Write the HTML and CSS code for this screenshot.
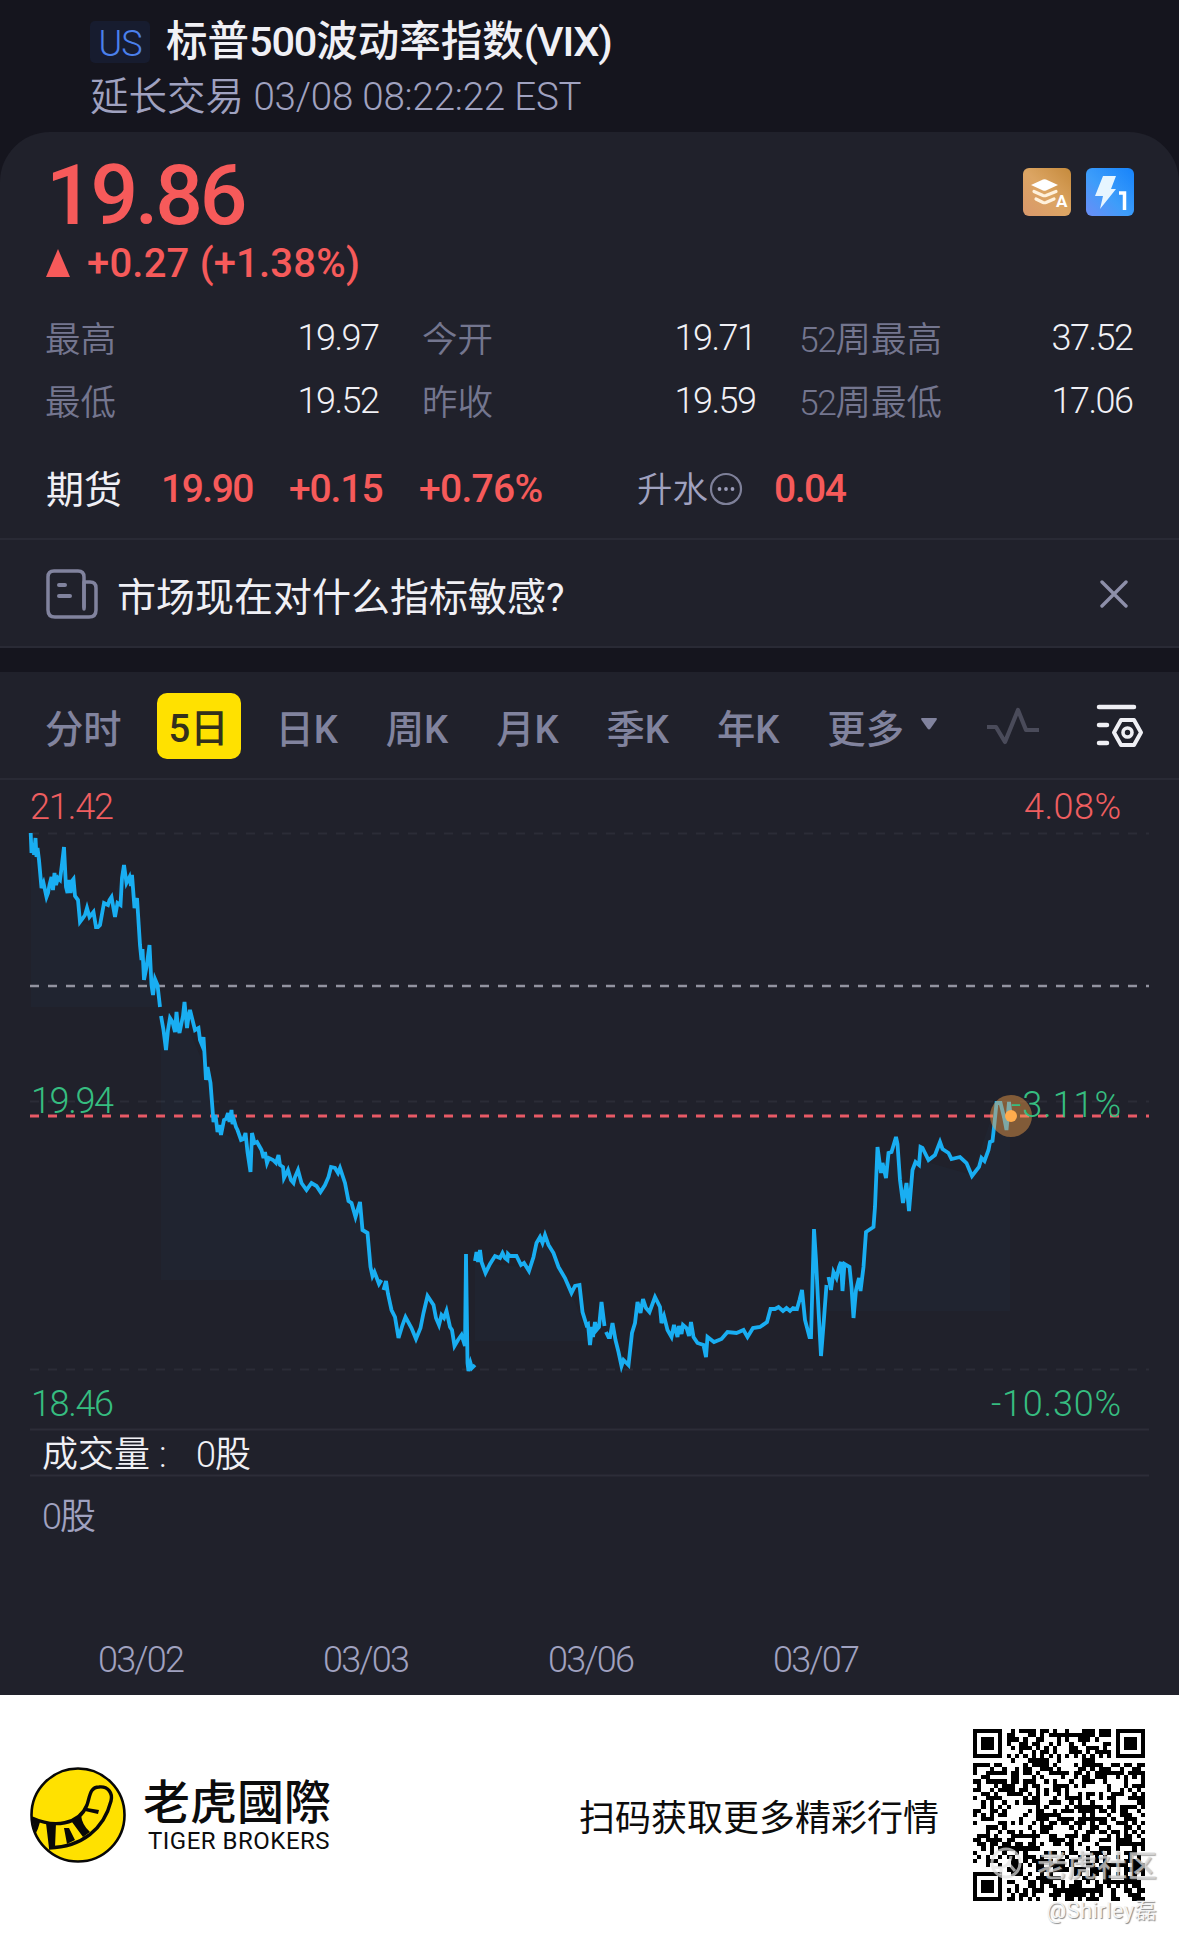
FILE: index.html
```html
<!DOCTYPE html>
<html lang="zh-CN">

<head>
    <meta charset="UTF-8">
    <meta name="viewport" content="width=device-width, initial-scale=1.0">
    <title>标普500波动率指数(VIX)</title>
    <link rel="stylesheet" href="styles.css">
</head>

<body>
    <header class="header">
        <div class="title-row">
            <span class="market">US</span>
            <h1>标普<span class="latin">500</span>波动率指数<span class="latin">(VIX)</span></h1>
        </div>
        <div class="session">延长交易 <span>03/08 08:22:22 EST</span></div>
    </header>

    <!-- Quote -->
    <section class="quote">
        <div class="quote-top">
            <div class="price">19.86</div>
            <div class="badges">
                <svg width="48" height="48" viewBox="0 0 48 48">
                    <defs>
                        <linearGradient id="gold" x1="0" y1="1" x2="1" y2="0">
                            <stop offset="0" stop-color="#d9986c" />
                            <stop offset=".5" stop-color="#dca563" />
                            <stop offset="1" stop-color="#c58a3c" />
                        </linearGradient>
                    </defs>
                    <rect width="48" height="48" rx="6" fill="url(#gold)" />
                    <path d="M8 17 20 11.5Q21.500 11 23 11.500L35 17 23 22.500Q21.500 23 20 22.500Z" fill="#fff" />
                    <path d="M11 23.500 20 27.500Q21.500 28 23 27.500L33 23.500M13 31 20 34.500Q21.500 35 23 34.500L31 31" fill="none" stroke="#fff1dc" stroke-width="3.200" stroke-linecap="round" />
                    <text x="33" y="39" class="badge-text" font-size="17">A</text>
                </svg>
                <svg width="48" height="48" viewBox="0 0 48 48">
                    <defs>
                        <linearGradient id="blue" x1="0" y1="1" x2="1" y2="0">
                            <stop offset="0" stop-color="#6b8df5" />
                            <stop offset=".45" stop-color="#3d9dfa" />
                            <stop offset="1" stop-color="#1683fb" />
                        </linearGradient>
                    </defs>
                    <rect width="48" height="48" rx="6" fill="url(#blue)" />
                    <path d="M17 8h13l-5 13h5L14 41l3-13H9Z" fill="#e6f5ff" />
                    <path d="M33 25h5.500v17" fill="none" stroke="#fff" stroke-width="3.500" />
                </svg>
            </div>
        </div>
        <div class="change">
            <svg width="24" height="28" viewBox="0 0 24 28">
                <path d="M12 0 24 28H0Z" fill="#f65a5a" />
            </svg>
            <span>+0.27 (+1.38%)</span>
        </div>

        <div class="stats">
            <div class="stat"><label>最高</label><span>19.97</span></div>
            <div class="stat"><label>今开</label><span>19.71</span></div>
            <div class="stat"><label><i>52</i>周最高</label><span>37.52</span></div>
            <div class="stat"><label>最低</label><span>19.52</span></div>
            <div class="stat"><label>昨收</label><span>19.59</span></div>
            <div class="stat"><label><i>52</i>周最低</label><span>17.06</span></div>
        </div>

        <div class="futures">
            <span class="futures-name">期货</span>
            <span class="up last">19.90</span>
            <span class="up diff">+0.15</span>
            <span class="up pct">+0.76%</span>
            <span class="premium">升水</span>
            <svg width="34" height="34" viewBox="0 0 34 34">
                <circle cx="17" cy="17" r="15" fill="none" stroke="#7e8099" stroke-width="2.200" />
                <g fill="#9a9cb8">
                    <circle cx="10.500" cy="17" r="1.900" />
                    <circle cx="17" cy="17" r="1.900" />
                    <circle cx="23.500" cy="17" r="1.900" />
                </g>
            </svg>
            <span class="up spread">0.04</span>
        </div>
    </section>

    <div class="news">
        <svg width="52" height="50" viewBox="0 0 52 50" fill="none" stroke="#81839e" stroke-width="3.500" stroke-linecap="round">
            <path d="M38 38V8Q38 2 32 2H8Q2 2 2 8V41Q2 48 9 48H43Q50 48 50 41V19Q50 13 44 13H39" />
            <path d="M38 13V40" />
            <path d="M13 16H19M13 27H24" stroke-width="4" />
        </svg>
        <span class="news-text">市场现在对什么指标敏感?</span>
        <svg width="28" height="28" viewBox="0 0 28 28" stroke="#8d8fa9" stroke-width="3.400" stroke-linecap="round">
            <path d="M2 2 26 26M26 2 2 26" />
        </svg>
    </div>

    <!-- Chart -->
    <nav class="tabs">
        <span>分时</span>
        <span class="active">5日</span>
        <span>日K</span>
        <span>周K</span>
        <span>月K</span>
        <span>季K</span>
        <span>年K</span>
        <span>更多</span>
        <svg class="caret" width="16" height="12" viewBox="0 0 16 12">
            <path d="M1 0H15Q16.500 0 15.500 2L9.500 10.500Q8 12.500 6.500 10.500L.5 2Q-.5 0 1 0Z" fill="#81839e" />
        </svg>
        <svg class="wave" width="54" height="38" viewBox="0 0 54 38" fill="none" stroke="#4a4b5a" stroke-width="4.200" stroke-linejoin="round">
            <path d="M1 20H10L19 35L32 3L40 23H53" />
        </svg>
        <svg class="settings" width="48" height="44" viewBox="0 0 48 44" fill="none" stroke="#efeff4" stroke-width="4.500" stroke-linecap="round" stroke-linejoin="round">
            <path d="M3 3H38M3 21H11M3 39H11" />
            <path d="M25 16H38L45 28.500 38 41H25L18 28.500Z" stroke-width="4" />
            <circle cx="31.500" cy="28.500" r="4.500" stroke-width="3.600" />
        </svg>
    </nav>

    <svg class="chart" width="1179" height="915" viewBox="0 780 1179 915">
        <!-- grid -->
        <g stroke="#2b2c37" stroke-width="2" stroke-dasharray="9 9">
            <path d="M30 833.500H1149M30 1101.500H1149M30 1369.500H1149" />
        </g>
        <path d="M30 1429.500H1149M30 1475.500H1149" stroke="#2c2d38" stroke-width="2" />

        <!-- area -->
        <g class="area">
            <path d="M31 850 42 885 64 870 80 922 97 928 124 875 134 900 144 975 160 1007H31Z" />
            <path d="M161 1016 184 1018 206 1070 218 1130 250 1148 316 1186 340 1170 365 1233 382 1280H161Z" />
            <path d="M475 1262 530 1268 543 1240 570 1290 590 1341H475Z" />
            <path d="M828 1285 862 1280 880 1165 896 1140 909 1210 920 1160 972 1175 996 1105 1010 1116V1311H828Z" />
        </g>

        <path d="M30 986H1149" stroke="#9293a0" stroke-width="2.600" stroke-dasharray="9 9" />
        <path d="M30 1116H1149" stroke="#e85a66" stroke-width="3" stroke-dasharray="9 9" />

        <!-- price -->
        <g class="line">
            <polyline points="30.7,833 31.5,853 33.5,843 34,855 35.5,838 36.5,857 37.500,848 39,860 41.5,888 43.5,883 46.5,897 48,893 49.5,885 51.5,877 53,890 54.5,873 56,885 58,878 60,880 62,864 64,847 66,887 67.500,893 69,880 70.5,893 72,881 73.5,879 75,896 78,900 80,922 83,918 85,915 87,908 89.5,917 93.5,912 96,927 98,927 100,925 102,914 104,903 108,905 109.500,900 111.5,897 115,917 117.5,903 120.5,905 122,878 124,865 126.5,883 129.5,877 131,886 132,875 134.5,908 137,898 140,945 141.500,960 142.5,949 144,980 146.5,967 149.5,945 151.5,985 153,995 155,979 157.5,985 160,1007" />
            <polyline points="161,1016 163.5,1030 166,1050 168,1030 170,1018 172.5,1022 175,1032 176.5,1012 178,1028 179.5,1033 181.5,1023 183,1016 184.5,1002 187,1028 188.500,1017 190,1010 192.5,1020 195,1030 198.5,1028 200,1040 202,1045 203.5,1037 206,1080 207.5,1067 210.5,1083 213.5,1122 215.5,1115 217.5,1132 219,1125 221,1135 224,1120 226,1119 228,1113 229.5,1122 231.5,1110 232.500,1124 234,1120 236,1127 237.5,1130 241,1140 243.500,1139 245.5,1133 247.500,1152 250.5,1172 252,1133 254.500,1143 257,1142 261.5,1150 263.5,1158 265,1152 267,1163 269,1158 273,1160 276,1163 278.5,1155 280,1165 283,1167 284,1178 288,1170 291,1180 293.5,1183 295,1177 298,1170 301.5,1183 306.5,1190 311.5,1183 316.5,1186 320.5,1192 325,1185 328.5,1177 331,1167 335,1168 338,1173 340,1168 345,1183 348.5,1201 351.5,1203 355.5,1217 360,1202 362.5,1230 367.5,1233 370.5,1267 372.5,1276 374.5,1272 379,1284 381.5,1280" />
            <polyline points="383.5,1290 386,1281 388,1294 391.5,1310 395,1317 398.5,1338 402.5,1325 405.5,1317 411.5,1328 416,1339 420.5,1328 423.5,1313 427.5,1296 433.5,1305 436,1318 439,1325 441.5,1315 444,1318 446.5,1311 450,1327 452,1330 454.5,1346 458,1340 461.5,1335 465,1346 466,1254 467.5,1363 468.5,1371 470.5,1363 472,1368 475,1365" />
            <polyline points="475,1261 476.5,1252 478,1262 480,1250 481.5,1262 485.5,1273 490,1264 495,1256 500,1258 502.5,1253 505,1258 507.5,1260 508,1254 510,1256 516.5,1256 521,1265 524,1263 529,1271 533.5,1257 536.5,1243 540,1237 542.5,1243 545,1235 548.5,1245 553.5,1253 558.5,1267 565,1278 571.5,1293 575,1286 579.5,1285 582.5,1312 586.5,1325 588,1324 590,1345 592,1327 593,1337 595,1322 596.5,1330 599,1327 601.5,1302 604.5,1326" />
            <polyline points="606,1332 608.5,1337 610,1337 612.5,1323 615.5,1340 618.5,1352 621.5,1366 623.5,1360 628.5,1365 632,1333 635,1323 637.5,1302 640.5,1313 643,1299 646,1308 649.5,1312 655,1297 660,1307 661.5,1323 664,1316 667.5,1330 671.5,1337 674,1325 677.5,1337 679,1326 681.5,1334 683,1325 686.5,1328 689,1336 691,1322 693.5,1337 697.5,1343 703.5,1345 706,1357 707.5,1337 714,1342 721.5,1339 727.5,1332 736.5,1333 743.5,1330 747.5,1337 753,1328 760,1327 767,1322 770.5,1309 775,1309 778.5,1307 783,1311 786.5,1308 790,1311 793,1308 797,1309 799.5,1300 802,1290 805,1320 809.5,1337 811,1337 814,1229 816,1260 818.5,1310 821,1356 823.5,1325 826.5,1285" />
            <polyline points="828.5,1277 831,1290 833.5,1272 836.5,1278 839,1267 841,1262 842.5,1291 844.5,1264 849.5,1267 851.5,1287 853.5,1318 856,1290 859,1278 860.5,1291 863.5,1267 866,1232 873.5,1227 875,1207 877.5,1147 881,1173 882.5,1163 886,1178 888.5,1153 891.5,1152 896,1137 897.500,1144 900,1180 903,1203 906.5,1183 909,1211 912.5,1170 915.5,1162 919,1165 920.5,1147 922.5,1148 924,1151 928.5,1160 935,1155 940,1142 942.5,1149 948.5,1153 951.5,1159 960,1157 966.5,1163 972,1176 979,1167 981.5,1158 984.5,1161 988.5,1150 990,1142 992.5,1141 994.5,1123 996.5,1103 1000.5,1103 1004,1117 1006.5,1130 1009,1102 1010.7,1116" />
        </g>

        <circle cx="1011" cy="1116" r="21" fill="#f9a24a" fill-opacity=".45" />
        <circle cx="1011" cy="1116" r="6" fill="#ffac4d" />

        <!-- axis labels -->
        <g class="axis red">
            <text x="30" y="819" textLength="84">21.42</text>
            <text x="1024" y="819" textLength="97">4.08%</text>
        </g>
        <g class="axis green">
            <text x="31" y="1113" textLength="83">19.94</text>
            <text x="1011" y="1117" textLength="110">-3.11%</text>
            <text x="31" y="1416" textLength="83">18.46</text>
            <text x="991" y="1416" textLength="130">-10.30%</text>
        </g>
        <g class="axis volume">
            <text x="42" y="1467">成交量</text>
            <text x="159" y="1467">:</text>
            <text x="196" y="1467" textLength="55">0股</text>
        </g>
        <g class="axis">
            <text x="42" y="1529" textLength="54">0股</text>
            <text x="98" y="1672" textLength="87">03/02</text>
            <text x="323" y="1672" textLength="87">03/03</text>
            <text x="548" y="1672" textLength="87">03/06</text>
            <text x="773" y="1672" textLength="87">03/07</text>
        </g>
    </svg>

    <footer class="footer">
        <svg class="logo" width="96" height="96" viewBox="0 0 96 96">
            <circle cx="48" cy="48" r="46.500" fill="#ffe100" stroke="#080808" stroke-width="2.600" />
            <path d="M2 51C24 61 49 58 57 38C60 29 60 20 69 20C78 19 83 26 81 34C74 62 52 80 19 81" fill="none" stroke="#080808" stroke-width="3.400" />
            <path d="M2 50 10 55Q8 63 5 68ZM16 56 26 56 25 80 19 81ZM34 61H39L45 73 37 77ZM42 55 51 48Q52 58 60 65L53 70ZM57 41 69 43 68 47 55 44Z" fill="#080808" />
        </svg>
        <div class="brand">
            <strong>老虎國際</strong>
            <span>TIGER BROKERS</span>
        </div>
        <p>扫码获取更多精彩行情</p>
        <div class="qr">
            <svg id="qr" width="172" height="172" viewBox="0 0 41 41" shape-rendering="crispEdges"></svg>
            <div class="watermark community">
                <svg width="34" height="34" viewBox="0 0 34 34" fill="none" stroke="currentColor" stroke-width="3">
                    <circle cx="17" cy="17" r="14" />
                    <path d="M5 21Q20 24 22 10M12 21V29M20 18 26 25" />
                </svg>
                <span>老虎社区</span>
            </div>
            <div class="watermark author">@Shirley磊</div>
        </div>
    </footer>

    <script src="script.js"></script>
</body>

</html>
```

FILE: styles.css
```css
* {
    box-sizing: border-box;
}

body {
    margin: 0;
    width: 1179px;
    background-color: #15151e;
    color: #f0f0f5;
    font-family: Roboto, "Noto Sans CJK SC", sans-serif;
}

svg {
    display: block;
    flex-shrink: 0;
}

/* Header */
.header {
    height: 132px;
    padding: 16px 90px 0;
}

.title-row {
    display: flex;
    align-items: center;
    height: 52px;
}

.market {
    width: 60px;
    height: 42px;
    border-radius: 5px;
    background-color: #171c2f;
    color: #4b80ec;
    font-size: 36px;
    font-weight: 350;
    line-height: 46px;
    text-align: center;
    letter-spacing: -1px;
}

h1 {
    margin: 0 0 0 16px;
    font-size: 41.5px;
    font-weight: 500;
    line-height: 52px;
    white-space: nowrap;
}

.latin {
    letter-spacing: -1.2px;
}

.session {
    height: 56px;
    color: #a0a2c0;
    font-size: 38.5px;
    font-weight: 350;
    line-height: 58px;
    white-space: pre;
}

.session span {
    letter-spacing: -0.2px;
}

/* Quote */
.quote {
    height: 408px;
    padding: 22px 46px 0;
    border-radius: 50px 50px 0 0;
    border-bottom: 2px solid #292a35;
    background-color: #20212b;
}

.quote-top {
    display: flex;
    justify-content: space-between;
    height: 84px;
}

.price {
    color: #f65a5a;
    font-size: 84px;
    font-weight: 500;
    line-height: 84px;
    letter-spacing: -3.2px;
}

.badges {
    display: flex;
    gap: 15px;
    padding-top: 14px;
    margin-right: -1px;
}

.badge-text {
    fill: #fff;
    font-weight: 700;
}

.change {
    display: flex;
    align-items: center;
    gap: 17px;
    height: 50px;
    color: #f65a5a;
    font-size: 40px;
    font-weight: 500;
    letter-spacing: 0.2px;
}

.stats {
    display: grid;
    grid-template-columns: repeat(3, 333px);
    grid-auto-rows: 63px;
    column-gap: 44px;
    margin-top: 18px;
}

.stat {
    display: flex;
    align-items: center;
    justify-content: space-between;
    font-size: 36px;
    font-weight: 350;
    letter-spacing: -1.5px;
}

.stat label {
    margin: -2px 0 0 -1px;
    color: #74768f;
    font-size: 35.5px;
    letter-spacing: 0;
}

.stat i {
    font-style: normal;
    letter-spacing: -1.5px;
}

.stat span {
    margin-right: 0.5px;
}

.futures {
    display: flex;
    align-items: center;
    height: 52px;
    margin-top: 31px;
    font-size: 38px;
    white-space: nowrap;
}

.futures .up {
    color: #f65a5a;
    font-size: 39px;
    font-weight: 500;
    letter-spacing: -1.5px;
}

.futures .futures-name {
    width: 115px;
    margin-top: -5px;
}

.futures .last {
    width: 128px;
}

.futures .diff {
    width: 130px;
    letter-spacing: -1.1px;
}

.futures .pct {
    width: 218px;
    letter-spacing: -0.7px;
}

.premium {
    width: 72px;
    margin-top: -5px;
    color: #a0a2c0;
    font-size: 35.5px;
    font-weight: 350;
}

.spread {
    margin-left: 31px;
}

/* News */
.news {
    display: flex;
    align-items: center;
    height: 108px;
    padding: 2px 51px 0 46px;
    border-bottom: 2px solid #292a35;
    background-color: #20212b;
}

.news-text {
    flex: 1;
    margin-left: 19px;
    font-size: 39px;
}

/* Tabs */
.tabs {
    display: flex;
    align-items: center;
    gap: 47.9px;
    height: 108px;
    margin-top: 24px;
    padding: 2px 0 0 45px;
    border-bottom: 2px solid #292a35;
    background-color: #20212b;
    color: #81839e;
    font-size: 38.3px;
    font-weight: 500;
    white-space: nowrap;
}

.tabs .active {
    width: 84px;
    height: 66px;
    margin: 0 -13px;
    border-radius: 10px;
    background-color: #ffe100;
    color: #33301c;
    line-height: 71px;
    text-align: center;
}

.tabs .caret {
    margin: 0 0 4px -31px;
}

.tabs .wave {
    margin-left: 1px;
}

.tabs .settings {
    margin-left: 8px;
}

/* Chart */
.chart {
    background-color: #20212b;
}

.area {
    fill: #1fa9e8;
    fill-opacity: 0.03;
}

.line {
    fill: none;
    stroke: #19aef2;
    stroke-width: 3.8;
    stroke-linejoin: miter;
}

.axis {
    fill: #a0a2c0;
    font-size: 36px;
    font-weight: 350;
}

.axis.red {
    fill: #ef5e60;
}

.axis.green {
    fill: #36bd80;
}

.axis.volume {
    fill: #f0f0f5;
}

/* Footer */
.footer {
    display: flex;
    align-items: center;
    height: 240px;
    padding: 0 34px 0 30px;
    background-color: #fff;
    color: #0c0c0c;
}

.brand {
    display: flex;
    flex-direction: column;
    margin-left: 17px;
}

.brand strong {
    font-family: "Noto Sans CJK TC", sans-serif;
    font-size: 47px;
    font-weight: 500;
    line-height: 50px;
}

.brand span {
    margin: 2px 0 0 5px;
    font-size: 24px;
    line-height: 30px;
    letter-spacing: 0.5px;
}

.footer p {
    margin: 0 34px 0 auto;
    font-size: 36px;
}

.qr {
    position: relative;
}

.watermark {
    position: absolute;
    color: rgba(225, 225, 225, 0.7);
    white-space: nowrap;
    text-shadow: 1px 1px 1px rgba(90, 90, 90, 0.5);
}

.community {
    display: flex;
    align-items: center;
    gap: 14px;
    top: 112px;
    left: 16px;
    font-size: 30px;
    font-weight: 500;
}

.author {
    top: 163px;
    right: -12px;
    color: #f4f4f4;
    font-size: 22px;
    letter-spacing: 0.4px;
    text-shadow: 1px 1px 1px #888;
}
```

FILE: script.js
```javascript
const SIZE = 41;
const qr = document.getElementById("qr");
let seed = 20230;

function nextBit() {
    seed = (seed * 1103515245 + 12345) % 2147483648;
    return seed / 2147483648 < 0.52;
}

// concentric square at the given centre, null when outside of it
function ring(x, y, cx, cy, radius) {
    const d = Math.max(Math.abs(x - cx), Math.abs(y - cy));
    return d > radius ? null : d;
}

function isDark(x, y) {
    const random = nextBit();
    const corners = [[3, 3], [SIZE - 4, 3], [3, SIZE - 4]];

    for (const [cx, cy] of corners) {
        const d = ring(x, y, cx, cy, 4);
        if (d !== null) {
            return d === 3 || d < 2;
        }
    }

    const align = ring(x, y, 34, 34, 2);
    if (align !== null) {
        return align !== 1;
    }
    if (x === 6 || y === 6) {
        return (x + y) % 2 === 0;
    }
    return random;
}

let path = "";
for (let y = 0; y < SIZE; y++) {
    for (let x = 0; x < SIZE; x++) {
        if (isDark(x, y)) {
            path += `M${x} ${y}h1v1h-1z`;
        }
    }
}
qr.innerHTML = `<path d="${path}" fill="#000"/>`;
```
